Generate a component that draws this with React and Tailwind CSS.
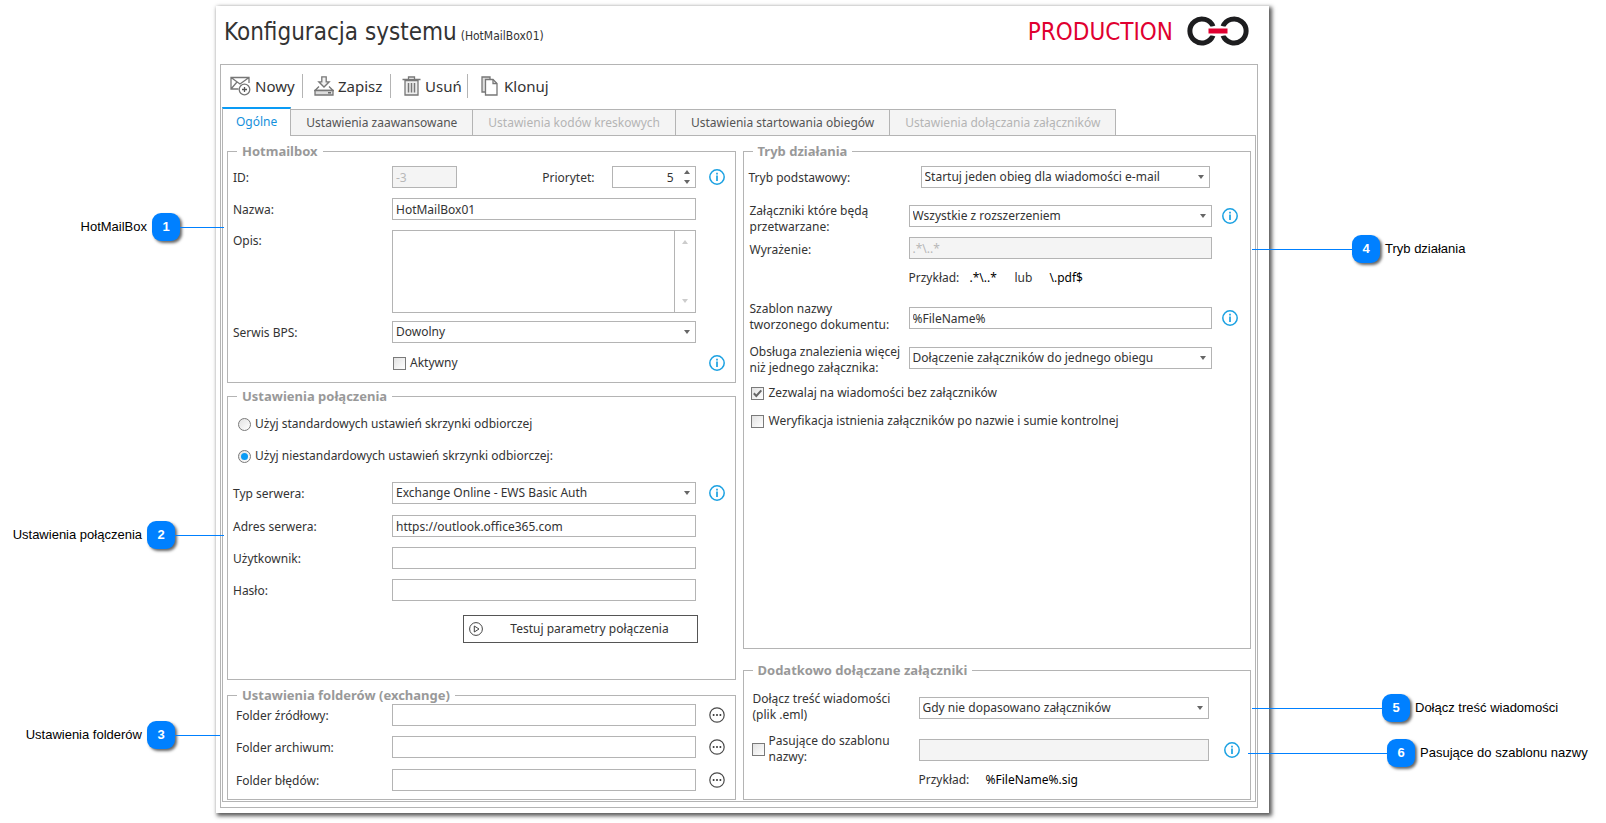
import React, { useState } from 'react';

const TABS = [
  { id: 'general', label: 'Ogólne' },
  { id: 'advanced', label: 'Ustawienia zaawansowane' },
  { id: 'barcodes', label: 'Ustawienia kodów kreskowych', disabled: true },
  { id: 'start', label: 'Ustawienia startowania obiegów' },
  { id: 'attach', label: 'Ustawienia dołączania załączników', disabled: true },
];

const LEFT_CALLOUTS = [
  { nr: 1, label: 'HotMailBox', top: 'top-[213px]', box: 'w-[224px]', line: 'w-[44px]' },
  { nr: 2, label: 'Ustawienia połączenia', top: 'top-[521px]', box: 'w-[224px]', line: 'w-[49px]' },
  { nr: 3, label: 'Ustawienia folderów', top: 'top-[721px]', box: 'w-[220px]', line: 'w-[45px]' },
];

const RIGHT_CALLOUTS = [
  { nr: 4, label: 'Tryb działania', top: 'top-[235px]', box: 'w-[354px]', line: 'w-[100px]' },
  { nr: 5, label: 'Dołącz treść wiadomości', top: 'top-[694px]', box: 'w-[354px]', line: 'w-[130px]' },
  { nr: 6, label: 'Pasujące do szablonu nazwy', top: 'top-[739px]', box: 'w-[358px]', line: 'w-[139px]' },
];

const FIELD = 'block h-[22px] w-full border border-[#b4b4b4] bg-white px-[3px] leading-5 text-[#333] outline-none disabled:bg-[#f4f4f4] disabled:text-[#b8b8b8]';

const InfoButton = () => (
  <button type="button" aria-label="Informacja" className="block size-4">
    <svg viewBox="0 0 16 16" className="size-4" fill="none" stroke="#1ba1e2">
      <circle cx="8" cy="8" r="7.2" strokeWidth="1.5" />
      <path d="M8 6.5v5.5" strokeWidth="1.7" />
      <path d="M8 3.8v1.6" strokeWidth="1.7" />
    </svg>
  </button>
);

const DotsButton = ({ label }) => (
  <button type="button" aria-label={label} className="block size-4">
    <svg viewBox="0 0 16 16" className="size-4">
      <circle cx="8" cy="8" r="7.2" fill="none" stroke="#4a4a4a" strokeWidth="1.2" />
      <circle cx="4.6" cy="8" r="1" fill="#333" />
      <circle cx="8" cy="8" r="1" fill="#333" />
      <circle cx="11.4" cy="8" r="1" fill="#333" />
    </svg>
  </button>
);

const Triangle = ({ up, color = '#666' }) => (
  <svg viewBox="0 0 6 4" className="h-1 w-1.5" fill={color}>
    {up ? <path d="M3 0 6 4H0Z" /> : <path d="M0 0h6L3 4Z" />}
  </svg>
);

const Select = ({ id, value }) => (
  <div className="relative">
    <select id={id} className={`${FIELD} appearance-none`} defaultValue={value}>
      <option>{value}</option>
    </select>
    <span className="pointer-events-none absolute top-[9px] right-[6px]">
      <Triangle />
    </span>
  </div>
);

const Group = ({ title, className = '', inner = 'pl-[5px]', children }) => (
  <fieldset className={`min-w-0 border border-[#b4b4b4] ${className}`}>
    <legend className="ml-[9px] px-[5px] text-[13px] leading-4 font-bold text-[#999]">{title}</legend>
    <div className={inner}>{children}</div>
  </fieldset>
);

const Row = ({ id, label, children, extra, className = '' }) => (
  <div className={`flex items-center ${className}`}>
    <label htmlFor={id} className="w-[159px] shrink-0 pt-0.5 leading-4">{label}</label>
    <div className="min-w-0 flex-1">{children}</div>
    <div className="w-[39px] shrink-0 pl-[13px]">{extra}</div>
  </div>
);

// two-line label, so the control is lined up from the top of the row
const TallRow = ({ id, label, children, extra, className = '', control = 'pt-1.5' }) => (
  <div className={`flex items-start ${className}`}>
    <label htmlFor={id} className="w-[160px] shrink-0 pl-px leading-4 whitespace-pre">{label}</label>
    <div className={`flex min-w-0 flex-1 items-center ${control}`}>
      <div className="min-w-0 flex-1">{children}</div>
      <div className="w-[38px] shrink-0 pl-[10px]">{extra}</div>
    </div>
  </div>
);

const CheckBox = ({ id, checked }) => (
  <span className="relative block size-[13px] shrink-0">
    <input
      id={id}
      type="checkbox"
      defaultChecked={checked}
      className="peer block size-[13px] appearance-none border border-[#7a7a7a] bg-linear-to-br from-[#e2e2e2] to-white"
    />
    <svg
      viewBox="0 0 13 13"
      className="pointer-events-none absolute inset-0 hidden size-[13px] peer-checked:block"
      fill="none"
      stroke="#666"
      strokeWidth="2"
    >
      <path d="M2.8 6.3 5.3 9 10.3 3.4" />
    </svg>
  </span>
);

const Radio = ({ id, checked, label, className = '' }) => (
  <div className={`flex items-center gap-1 pl-[5px] ${className}`}>
    <span className="relative block size-[13px] shrink-0">
      <input
        id={id}
        type="radio"
        name="mailbox"
        defaultChecked={checked}
        className="peer block size-[13px] appearance-none rounded-full border border-[#7a7a7a] bg-linear-to-br from-[#e2e2e2] to-white"
      />
      <span className="pointer-events-none absolute inset-[3px] hidden rounded-full bg-[#0a9bf5] peer-checked:block" />
    </span>
    <label htmlFor={id} className="leading-4">{label}</label>
  </div>
);

const Badge = ({ nr }) => (
  <span className="flex size-7 shrink-0 items-center justify-center rounded-[9px] bg-[#0080ff] text-[13px] font-bold text-white shadow-[2px_2px_3px_rgba(0,0,0,0.6)]">
    {nr}
  </span>
);

const Toolbar = () => {
  const item = 'flex items-center gap-1';
  const line = 'h-6 w-px bg-[#b4b4b4]';
  return (
    <div className="flex h-[42px] items-center pl-[8px] font-['Noto_Sans',sans-serif] text-[15px] text-[#333]">
      <button type="button" className={`${item} w-[72px]`}>
        <svg viewBox="0 0 21 20" className="h-5 w-[21px] shrink-0" fill="none" stroke="#777" strokeWidth="1.3">
          <path d="M8.500 13H1V1.500h18V7M1 1.500l9 6.500 9-6.500M1 13l6-7" />
          <circle cx="14.500" cy="13.500" r="5.300" fill="#fff" />
          <path d="M14.500 11v5M12 13.500h5" stroke="#555" />
        </svg>
        Nowy
      </button>
      <span className={line} />
      <button type="button" className={`${item} ml-[11px] w-[76px]`}>
        <svg viewBox="0 0 20 20" className="size-5 shrink-0" fill="#f2f2f2" stroke="#777" strokeWidth="1.3">
          <path d="M7.800.8h4.400v5h3L10 11 4.800 5.800h3Z" />
          <path d="M5 10.500 1 14.500h18l-4-4" fill="none" />
          <path d="M1 14.500h18v4.500H1Z" fill="#ddd" />
          <path d="M14 16.800h3" stroke="#555" />
        </svg>
        Zapisz
      </button>
      <span className={line} />
      <button type="button" className={`${item} ml-[11px] w-[65px]`}>
        <svg viewBox="0 0 19 20" className="h-5 w-[19px] shrink-0" fill="none" stroke="#777" strokeWidth="1.3">
          <path d="M3 4.500h13V19H3Z" fill="#eee" />
          <path d="M.5 3.500h18M6.500 3V1h6v2" />
          <path d="M6.500 7v9.500M9.500 7v9.500M12.500 7v9.500" strokeWidth="1.500" />
        </svg>
        Usuń
      </button>
      <span className={line} />
      <button type="button" className="ml-[13px] flex items-center gap-1.5">
        <svg viewBox="0 0 17 20" className="h-5 w-[17px] shrink-0" stroke="#777" strokeWidth="1.3">
          <path d="M1 1h8v15H1Z" fill="#ddd" />
          <path d="M4.500 3.500h7.500l4 4V19H4.500Z" fill="#fff" />
          <path d="M12 3.500v4h4" fill="none" />
        </svg>
        Klonuj
      </button>
    </div>
  );
};

const ConnectionGroup = () => (
  <Group title="Ustawienia połączenia" className="mt-[5px] h-[292px]">
    <Radio id="standard" label="Użyj standardowych ustawień skrzynki odbiorczej" className="mt-3" />
    <Radio id="custom" checked label="Użyj niestandardowych ustawień skrzynki odbiorczej:" className="mt-4" />
    <Row id="server-type" label="Typ serwera:" className="mt-[18px]" extra={<InfoButton />}>
      <Select id="server-type" value="Exchange Online - EWS Basic Auth" />
    </Row>
    <Row id="server-url" label="Adres serwera:" className="mt-[11px]">
      <input id="server-url" className={FIELD} defaultValue="https://outlook.office365.com" />
    </Row>
    <Row id="user" label="Użytkownik:" className="mt-[10px]">
      <input id="user" className={FIELD} />
    </Row>
    <Row id="password" label="Hasło:" className="mt-[10px]">
      <input id="password" type="password" className={FIELD} />
    </Row>
    <div className="mt-[14px] flex justify-end pr-[37px]">
      <button type="button" className="flex h-7 w-[235px] items-center border border-[#555] px-[5px]">
        <svg viewBox="0 0 14 14" className="size-[14px]" fill="none" stroke="#444">
          <circle cx="7" cy="7" r="6.4" />
          <path d="M5.300 4v6l4.700-3Z" />
        </svg>
        <span className="flex-1 pl-[5px] text-center">Testuj parametry połączenia</span>
      </button>
    </div>
  </Group>
);

const App = () => {
  const [tab, setTab] = useState('general');

  return (
    <div className="relative min-h-screen bg-white px-[216px] pt-1.5 pr-[337px] pb-[10px] font-['Noto_Sans','DejaVu_Sans_Condensed',sans-serif] text-[12px] text-[#333]">
      <main className="bg-white px-1 pb-[5px] shadow-[2px_2px_4px_1px_rgba(0,0,0,0.65)]">
        <header className="flex h-[58px] items-center justify-between pr-[15px] pb-2 pl-1 font-['DejaVu_Sans_Condensed',sans-serif]">
          <h1 className="flex items-baseline gap-1 pt-1.5 text-2xl leading-8 font-normal">
            Konfiguracja systemu
            <span className="text-[12px]">(HotMailBox01)</span>
          </h1>
          <div className="flex items-center gap-[13px]">
            <span className="pt-0.5 text-2xl text-[#e00030]">PRODUCTION</span>
            <svg viewBox="0 0 64 30" className="h-[30px] w-16" fill="none" stroke="#1d1d1f" strokeWidth="5">
              <path d="M27 10.500A12 12 0 1 0 27 19.500" />
              <path d="M37 10.500A12 12 0 1 1 37 19.500" />
              <path d="M22.500 15h19" stroke="#fff" strokeWidth="9" />
              <path d="M22.500 15h19" stroke="#e00030" />
            </svg>
          </div>
        </header>

        <div className="mr-[7px] border border-[#b4b4b4] px-px pb-[5px]">
          <Toolbar />

          <div role="tablist" className="flex items-end">
            {TABS.map((t) => (
              <button
                key={t.id}
                type="button"
                role="tab"
                aria-selected={tab === t.id}
                disabled={t.disabled}
                onClick={() => setTab(t.id)}
                className={
                  tab === t.id
                    ? 'relative z-10 -mb-px h-[29px] border-x border-t-2 border-x-[#b4b4b4] border-t-[#0a9bf5] bg-white px-[13px] pb-px text-[#1590dc]'
                    : 'h-[26px] border-t border-r border-[#b4b4b4] bg-[#f4f4f4] px-[15px] text-[#555] disabled:text-[#b4b4b4]'
                }
              >
                {t.label}
              </button>
            ))}
          </div>

          <div className="grid grid-cols-2 gap-[7px] border border-[#b4b4b4] px-1 pt-[7px] pb-px">
            <div>
              <Group title="Hotmailbox" className="h-[240px]">
                <div className="mt-[7px] flex items-center">
                  <label htmlFor="mb-id" className="w-[159px] shrink-0 pt-0.5">ID:</label>
                  <div className="flex flex-1 items-center justify-between">
                    <div className="w-[65px]">
                      <input id="mb-id" className={FIELD} defaultValue="-3" disabled />
                    </div>
                    <div className="flex items-center gap-[17px]">
                      <label htmlFor="priority" className="pt-0.5">Priorytet:</label>
                      <div className="relative w-[84px]">
                        <input id="priority" className={`${FIELD} pr-[21px] text-right`} defaultValue="5" />
                        <span className="absolute inset-y-0 right-[6px] flex flex-col justify-between py-[4px]">
                          <Triangle up />
                          <Triangle />
                        </span>
                      </div>
                    </div>
                  </div>
                  <div className="w-[39px] pl-[13px]"><InfoButton /></div>
                </div>
                <Row id="name" label="Nazwa:" className="mt-[10px]">
                  <input id="name" className={FIELD} defaultValue="HotMailBox01" />
                </Row>
                <div className="mt-[10px] flex">
                  <label htmlFor="desc" className="mt-[3px] w-[159px] shrink-0 leading-4">Opis:</label>
                  <div className="mr-[39px] flex h-[83px] flex-1 border border-[#b4b4b4]">
                    <textarea id="desc" className="flex-1 resize-none p-[3px] outline-none" />
                    <div className="flex w-[21px] flex-col items-center justify-between border-l border-[#b4b4b4] py-[9px]">
                      <Triangle up color="#ccc" />
                      <Triangle color="#ccc" />
                    </div>
                  </div>
                </div>
                <Row id="service" label="Serwis BPS:" className="mt-[8px]">
                  <Select id="service" value="Dowolny" />
                </Row>
                <div className="mt-[11px] flex items-center justify-between pl-[160px]">
                  <div className="flex items-center gap-1">
                    <CheckBox id="active" />
                    <label htmlFor="active">Aktywny</label>
                  </div>
                  <div className="w-[39px] pl-[13px]"><InfoButton /></div>
                </div>
              </Group>

              <ConnectionGroup />

              <Group title="Ustawienia folderów (exchange)" className="mt-[7px] pb-[8px]">
                <Row id="src" label={<span className="pl-[3px]">Folder źródłowy:</span>} className="mt-px" extra={<DotsButton label="Wybierz folder źródłowy" />}>
                  <input id="src" className={FIELD} />
                </Row>
                <Row id="arch" label={<span className="pl-[3px]">Folder archiwum:</span>} className="mt-[10px]" extra={<DotsButton label="Wybierz folder archiwum" />}>
                  <input id="arch" className={FIELD} />
                </Row>
                <Row id="err" label={<span className="pl-[3px]">Folder błędów:</span>} className="mt-[11px]" extra={<DotsButton label="Wybierz folder błędów" />}>
                  <input id="err" className={FIELD} />
                </Row>
              </Group>
            </div>

            <div className="flex flex-col">
              <Group title="Tryb działania" className="h-[506px]">
                <div className="mt-[7px] flex items-center pr-[40px]">
                  <label htmlFor="mode" className="w-[172px] shrink-0 pt-0.5">Tryb podstawowy:</label>
                  <div className="flex-1">
                    <Select id="mode" value="Startuj jeden obieg dla wiadomości e-mail" />
                  </div>
                </div>
                <TallRow id="which" label={'Załączniki które będą\nprzetwarzane:'} className="mt-[15px]" control="pt-0.5" extra={<InfoButton />}>
                  <Select id="which" value="Wszystkie z rozszerzeniem" />
                </TallRow>
                <TallRow id="regex" label={<span className="block pt-[5px]">Wyrażenie:</span>} className="mt-0.5" control="pt-0">
                  <input id="regex" className={FIELD} defaultValue=".*\..*" disabled />
                </TallRow>
                <p className="mt-[11px] flex pl-[160px] leading-4">
                  <span className="w-[61px]">Przykład:</span>
                  <span className="w-[45px] text-black">.*\..*</span>
                  <span className="w-[35px]">lub</span>
                  <span className="text-black">\.pdf$</span>
                </p>
                <TallRow id="template" label={'Szablon nazwy\ntworzonego dokumentu:'} className="mt-[15px]" extra={<InfoButton />}>
                  <input id="template" className={FIELD} defaultValue="%FileName%" />
                </TallRow>
                <TallRow id="many" label={'Obsługa znalezienia więcej\nniż jednego załącznika:'} className="mt-[11px]" control="pt-[3px]">
                  <Select id="many" value="Dołączenie załączników do jednego obiegu" />
                </TallRow>
                <div className="mt-[8px] flex items-center gap-[5px] pl-0.5">
                  <CheckBox id="allow" checked />
                  <label htmlFor="allow">Zezwalaj na wiadomości bez załączników</label>
                </div>
                <div className="mt-[10px] flex items-center gap-[5px] pl-0.5">
                  <CheckBox id="verify" />
                  <label htmlFor="verify">Weryfikacja istnienia załączników po nazwie i sumie kontrolnej</label>
                </div>
              </Group>

              <Group title="Dodatkowo dołączane załączniki" className="mt-[13px] flex-1" inner="pl-[8px]">
                <div className="mt-[13px] flex items-start pr-[41px]">
                  <label htmlFor="eml" className="w-[167px] shrink-0 pl-px leading-4">
                    Dołącz treść wiadomości<br />(plik .eml)
                  </label>
                  <div className="flex-1 pt-1.5">
                    <Select id="eml" value="Gdy nie dopasowano załączników" />
                  </div>
                </div>
                <div className="mt-[10px] flex items-start">
                  <div className="flex w-[167px] shrink-0 items-center gap-1">
                    <CheckBox id="match" />
                    <label htmlFor="match" className="leading-4">Pasujące do szablonu<br />nazwy:</label>
                  </div>
                  <div className="flex flex-1 items-center pt-1.5">
                    <input aria-label="Szablon nazwy" className={FIELD} disabled />
                    <div className="w-[41px] shrink-0 pl-[15px]"><InfoButton /></div>
                  </div>
                </div>
                <p className="mt-[7px] flex pl-[167px] leading-4">
                  <span className="w-[67px]">Przykład:</span>
                  <span className="text-black">%FileName%.sig</span>
                </p>
              </Group>
            </div>
          </div>
        </div>
      </main>

      {LEFT_CALLOUTS.map((c) => (
        <div key={c.nr} className={`absolute left-0 flex items-center justify-end font-['Liberation_Sans',Arial,sans-serif] text-[13px] text-black ${c.top} ${c.box}`}>
          <span className="pr-[5px]">{c.label}</span>
          <Badge nr={c.nr} />
          <span className={`h-px bg-[#0080ff] ${c.line}`} />
        </div>
      ))}
      {RIGHT_CALLOUTS.map((c) => (
        <div key={c.nr} className={`absolute right-0 flex items-center font-['Liberation_Sans',Arial,sans-serif] text-[13px] text-black ${c.top} ${c.box}`}>
          <span className={`h-px shrink-0 bg-[#0080ff] ${c.line}`} />
          <Badge nr={c.nr} />
          <span className="pl-[5px] whitespace-nowrap">{c.label}</span>
        </div>
      ))}
    </div>
  );
};

export default App;
